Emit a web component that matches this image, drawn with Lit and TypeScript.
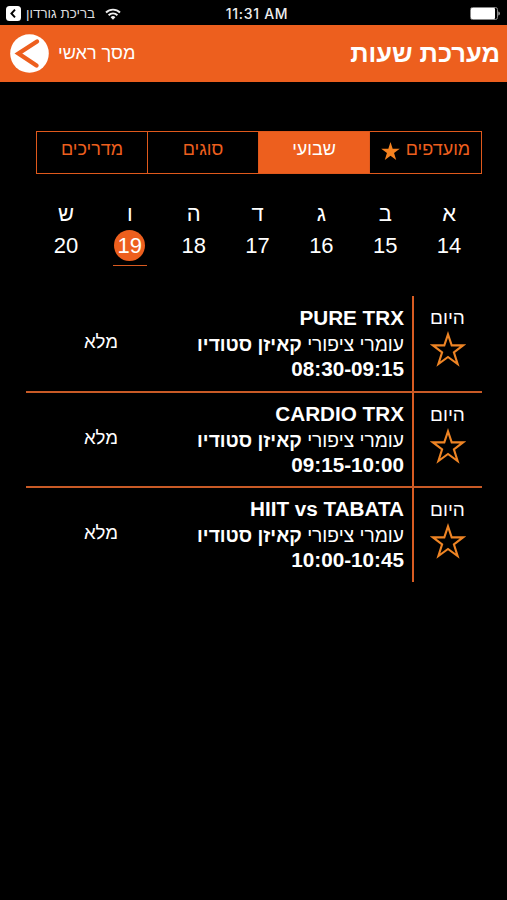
import { LitElement, html, css } from "lit";
import { customElement } from "lit/decorators.js";
import { classMap } from "lit/directives/class-map.js";

const DAYS = [
  ["א", 14], ["ב", 15], ["ג", 16], ["ד", 17], ["ה", 18], ["ו", 19], ["ש", 20],
] as const;

const LESSONS = [
  { name: "PURE TRX", time: "08:30-09:15" },
  { name: "CARDIO TRX", time: "09:15-10:00" },
  { name: "HIIT vs TABATA", time: "10:00-10:45" },
];

@customElement("app-root")
export class AppRoot extends LitElement {
  static styles = css`
    :host {
      display: block;
      height: 900px;
      overflow: hidden;
      background: #000;
      color: #fff;
      font-family: "Liberation Sans", Arial, sans-serif;
      direction: rtl;
    }
    * { box-sizing: border-box; }
    svg { display: block; flex: none; }
    .status {
      direction: ltr;
      display: grid;
      grid-template-columns: 1fr auto 1fr;
      align-items: center;
      height: 25px;
      padding: 2px 7px 0 6px;
    }
    .source { display: flex; align-items: center; }
    .source span { font-size: 13.4px; line-height: 16px; margin: 0 10px 0 5px; color: #ddd; }
    .clock { font: 500 14px/16px Inter, sans-serif; color: #eee; letter-spacing: 0.7px; margin-left: 8px; }
    .battery { justify-self: end; }
    header {
      height: 57px;
      background: #ed5f1e;
      display: flex;
      align-items: center;
      justify-content: space-between;
      padding: 0 7px 0 10px;
    }
    h1 { margin: 0 0 2px; font-size: 25.5px; line-height: 32px; font-weight: 700; }
    .back { display: flex; align-items: center; gap: 9px; }
    .back span { font-size: 18.1px; line-height: 22px; margin-bottom: 2px; }
    .tabs {
      display: grid;
      grid-template-columns: repeat(4, 1fr);
      margin: 49px 25px 0 36px;
      height: 43px;
      border: 1px solid #e0591c;
    }
    .tab {
      display: flex;
      justify-content: center;
      align-items: center;
      gap: 6px;
      padding-bottom: 6px;
      font-size: 18px;
      color: #ed5f1e;
    }
    .tab + .tab { border-right: 1px solid #e0591c; }
    .tab.on { background: #ed5f1e; color: #fff; }
    .tab svg { margin-top: 3px; }
    .days {
      display: grid;
      grid-template-columns: repeat(7, 1fr);
      margin: 28px 26px 0 34px;
    }
    .day { display: flex; flex-direction: column; align-items: center; font-size: 22px; }
    .letter { line-height: 24px; height: 28px; }
    .num { width: 34px; height: 36px; display: flex; justify-content: center; }
    .num b { font-weight: 400; width: 31px; height: 31px; line-height: 31px; text-align: center; border-radius: 50%; }
    .num.on { border-bottom: 1.5px solid #d85a20; }
    .num.on b { background: #ed5f1e; }
    .list { margin: 30px 25px 0 26px; }
    .row {
      display: grid;
      grid-template-columns: 70px 1fr 150px;
      height: 95.5px;
    }
    .row:first-child { height: 94.6px; }
    .row + .row { border-top: 2px solid #c85a26; }
    .fav {
      border-left: 2px solid #d85c22;
      display: flex;
      flex-direction: column;
      align-items: center;
      padding: 11px 1px 0 0;
      font-size: 19px;
      line-height: 22px;
    }
    .fav svg { margin-top: 2px; }
    .info { padding: 9px 8px 0 0; white-space: nowrap; }
    .row + .row .info { padding-top: 8px; }
    .row + .row .state { padding-top: 34px; }
    .name, .time { font-size: 20.7px; line-height: 25px; font-weight: 700; }
    .who { font-size: 19.2px; line-height: 26px; padding-top: 2px; height: 26px; }
    .state { padding-top: 35px; text-align: center; font-size: 18.6px; line-height: 22px; }
  `;

  render() {
    return html`
      <div class="status">
        <div class="source">
          <svg width="15" height="15" viewBox="0 0 15 15">
            <rect width="15" height="15" rx="3.5" fill="#fff" />
            <path d="M9 3.6 5.4 7.5 9 11.4" fill="none" stroke="#000" stroke-width="1.9" />
          </svg>
          <span dir="rtl">בריכת גורדון</span>
          <svg width="16" height="12" viewBox="0 0 16 12" fill="none" stroke="#eee" stroke-width="1.9">
            <path d="M1 4.5a10 10 0 0 1 14 0" />
            <path d="M3.6 7.2a6.3 6.3 0 0 1 8.8 0" />
            <path d="M8 11.7 5.6 9.2a3.4 3.4 0 0 1 4.8 0z" fill="#eee" stroke="none" />
          </svg>
        </div>
        <div class="clock">11:31 AM</div>
        <svg class="battery" width="30" height="13" viewBox="0 0 30 13">
          <rect x=".5" y=".5" width="27" height="12" rx="2" fill="none" stroke="#888" />
          <rect x="1" y="1" width="24" height="11" rx="1" fill="#fff" />
          <path d="M28.5 4.5c1.6.8 1.6 3.2 0 4z" fill="#ddd" />
        </svg>
      </div>
      <header>
        <h1>מערכת שעות</h1>
        <div class="back">
          <span>מסך ראשי</span>
          <svg width="39" height="39" viewBox="0 0 39 39">
            <circle cx="19.5" cy="19.5" r="19.3" fill="#fff" />
            <path d="M27 7.5 8.5 19.5 26.5 31.5" fill="none" stroke="#ed5f1e" stroke-width="4.4" stroke-linecap="round" />
          </svg>
        </div>
      </header>
      <nav class="tabs">
        <div class="tab">
          <span>מועדפים</span>
          <svg width="19" height="18" viewBox="0 0 36 35">
            <path fill="#f58220" d="M18 0 22.2 13.2H36L24.9 21.4 29.1 35 18 26.6 6.9 35 11.1 21.4 0 13.2H13.8Z" />
          </svg>
        </div>
        <div class="tab on"><span>שבועי</span></div>
        <div class="tab"><span>סוגים</span></div>
        <div class="tab"><span>מדריכים</span></div>
      </nav>
      <div class="days">
        ${DAYS.map(([letter, n]) => html`
          <div class="day">
            <div class="letter">${letter}</div>
            <div class=${classMap({ num: true, on: n === 19 })}><b>${n}</b></div>
          </div>`)}
      </div>
      <div class="list">
        ${LESSONS.map((l) => html`
          <div class="row">
            <div class="fav">
              <span>היום</span>
              <svg width="36" height="36" viewBox="0 0 36 36">
                <path fill="none" stroke="#ee8424" stroke-width="2.1" stroke-miterlimit="10"
                  d="M18 3.4 21.7 14.4H33L23.9 21.4 27.6 33 18 26 8.4 33 12.1 21.4 3 14.4H14.3Z" />
              </svg>
            </div>
            <div class="info">
              <div class="name"><bdi>${l.name}</bdi></div>
              <div class="who"><span>עומרי ציפורי</span> <b>קאיזן סטודיו</b></div>
              <div class="time"><bdi dir="ltr">${l.time}</bdi></div>
            </div>
            <div class="state">מלא</div>
          </div>`)}
      </div>
    `;
  }
}
